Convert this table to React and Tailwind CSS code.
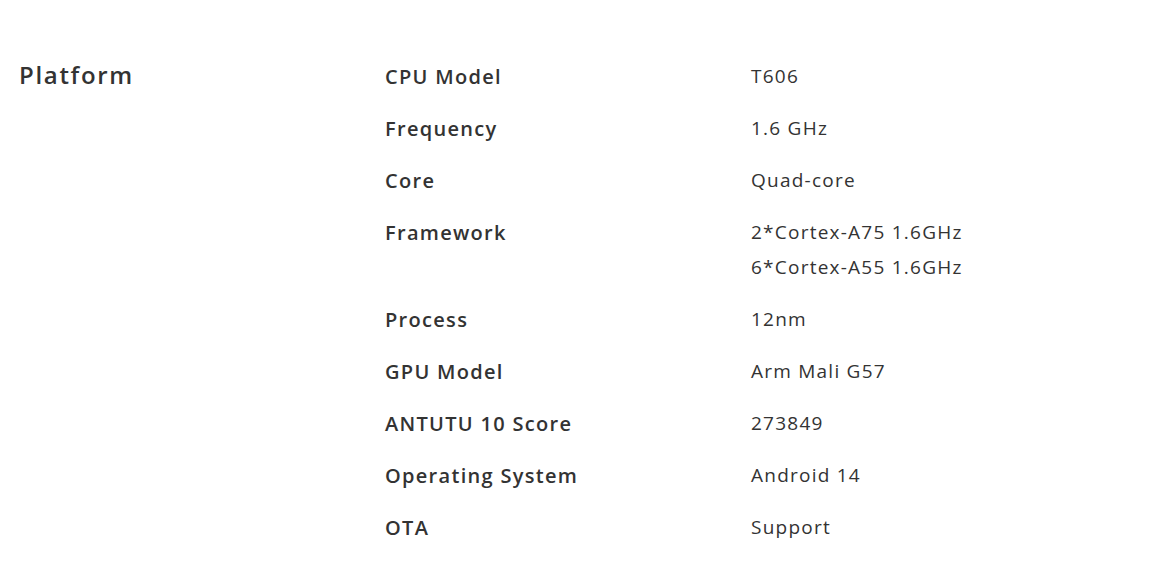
const specs = [
  { label: 'CPU Model', value: ['T606'] },
  { label: 'Frequency', value: ['1.6 GHz'] },
  { label: 'Core', value: ['Quad-core'] },
  { label: 'Framework', value: ['2*Cortex-A75 1.6GHz', '6*Cortex-A55 1.6GHz'] },
  { label: 'Process', value: ['12nm'] },
  { label: 'GPU Model', value: ['Arm Mali G57'] },
  { label: 'ANTUTU 10 Score', value: ['273849'] },
  { label: 'Operating System', value: ['Android 14'] },
  { label: 'OTA', value: ['Support'] },
];

export default function App() {
  return (
    <div
      className="min-h-screen bg-white text-[#333333] pl-[19px] pt-[59px]"
      style={{ fontFamily: '"Open Sans", "Liberation Sans", sans-serif' }}
    >
      <div className="grid grid-cols-[366px_366px_1fr]">
        <h2 className="text-[24px] font-semibold leading-[31px] tracking-[0.07em]">Platform</h2>
        <dl className="col-span-2 flex flex-col gap-[17px]">
          {specs.map((s) => (
            <div key={s.label} className="grid grid-cols-[366px_1fr]">
              <dt className="text-[20px] font-semibold leading-[35px] tracking-[0.065em]">{s.label}</dt>
              <dd className="text-[19px] font-normal leading-[35px] tracking-[0.065em]">
                {s.value.map((v) => (
                  <div key={v}>{v}</div>
                ))}
              </dd>
            </div>
          ))}
        </dl>
      </div>
    </div>
  );
}
